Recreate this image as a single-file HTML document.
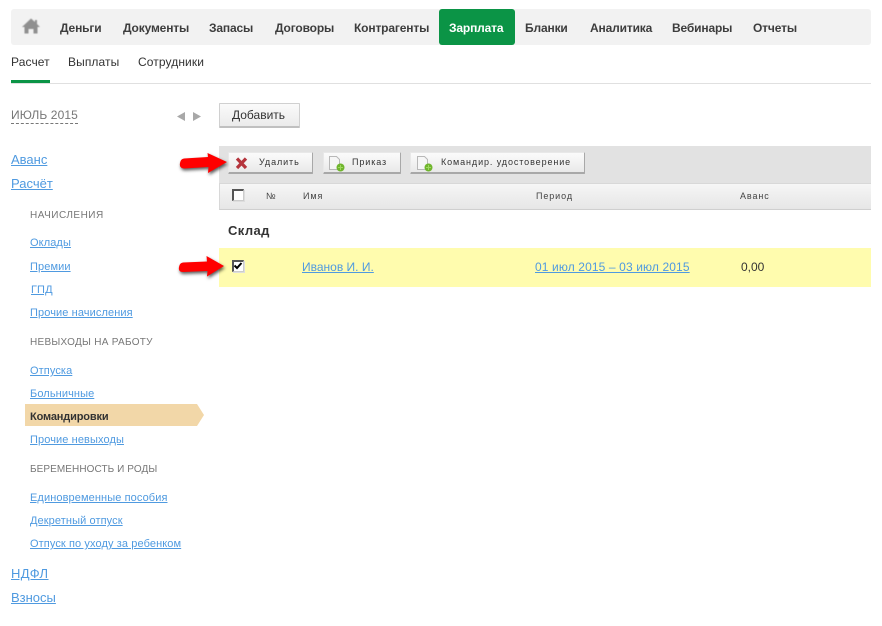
<!DOCTYPE html>
<html lang="ru"><head><meta charset="utf-8"><title>Зарплата</title>
<style>
html,body{margin:0;padding:0;background:#fff}
#p{position:relative;width:882px;height:626px;overflow:hidden;font-family:"Liberation Sans",Arial,sans-serif;background:#fff}
#p div,#p a,#p span.t,#p svg{position:absolute}
.t{white-space:nowrap}
.n{top:20px;height:16px;line-height:16px;font-size:12px;font-weight:bold;color:#3d3d3d;letter-spacing:-.15px}
.s{top:54px;line-height:16px;font-size:12px;color:#333;letter-spacing:.1px}
a{color:#4f9ae0;text-decoration:underline;white-space:nowrap}
.l1{font-size:13px;line-height:16px;left:11px}
.l2{font-size:11px;line-height:14px;left:30px;letter-spacing:.1px}
.h{font-size:10px;line-height:14px;left:30px;color:#777;white-space:nowrap}
.b{background:linear-gradient(#fbfbfb,#e9e9e9);border:1px solid #e8e8e8;border-right-color:#a8a8a8;border-bottom:2px solid #a8a8a8;box-sizing:border-box;border-radius:1px}
.bt{font-size:9px;letter-spacing:.9px;line-height:12px;color:#333;white-space:nowrap;top:156px}
.th{font-size:9px;letter-spacing:.9px;line-height:12px;color:#444;white-space:nowrap;top:190px}
.cb{width:9px;height:9px;background:#fff;border:2px solid #555;border-right:1px solid #ccc;border-bottom:1px solid #ccc;box-shadow:1px 1px 0 #ddd}
</style></head><body><div id="p">
<div style="left:11px;top:9px;width:860px;height:36px;background:#f2f2f2;border-radius:3px"></div>
<svg style="left:21px;top:17px;filter:blur(.4px)" width="20" height="18" viewBox="0 0 20 18"><path d="M10 1.500L14 5V3h2v4l3 3h-2.500v6.500h-4V12h-5v4.500h-4V10H1z" fill="#8f8f8f"/></svg>
<span class="t n" style="left:60px">Деньги</span>
<span class="t n" style="left:123px">Документы</span>
<span class="t n" style="left:209px">Запасы</span>
<span class="t n" style="left:275px">Договоры</span>
<span class="t n" style="left:354px">Контрагенты</span>
<div style="left:439px;top:9px;width:76px;height:36px;background:#0b9446;border-radius:3px"></div>
<span class="t n" style="left:449px;color:#fff">Зарплата</span>
<span class="t n" style="left:525px">Бланки</span>
<span class="t n" style="left:590px">Аналитика</span>
<span class="t n" style="left:672px">Вебинары</span>
<span class="t n" style="left:753px">Отчеты</span>

<span class="t s" style="left:11px">Расчет</span>
<span class="t s" style="left:68px">Выплаты</span>
<span class="t s" style="left:138px">Сотрудники</span>
<div style="left:11px;top:83px;width:860px;height:1px;background:#e0e0e0"></div>
<div style="left:11px;top:80px;width:39px;height:3px;background:#0b9446"></div>

<span class="t" style="left:11px;top:108px;font-size:12px;line-height:15px;color:#777;letter-spacing:.1px;border-bottom:1px dashed #777">ИЮЛЬ 2015</span>
<svg style="left:176px;top:111px" width="26" height="11"><path d="M1 5.500L9 1v9z" fill="#a8a8a8"/><path d="M17 1l8 4.500-8 4.500z" fill="#a8a8a8"/></svg>
<div class="b" style="left:219px;top:103px;width:81px;height:25px;background:linear-gradient(#fafafa,#ebebeb);border:1px solid #d0d0d0;border-bottom:2px solid #c0c0c0"></div>
<span class="t" style="left:232px;top:107px;font-size:12px;line-height:16px;color:#333">Добавить</span>

<a class="l1" style="top:152px">Аванс</a>
<a class="l1" style="top:176px">Расчёт</a>
<span class="h" style="top:209px;position:absolute;letter-spacing:.5px">НАЧИСЛЕНИЯ</span>
<a class="l2" style="top:236px">Оклады</a>
<a class="l2" style="top:260px">Премии</a>
<a class="l2" style="top:283px;left:31px">ГПД</a>
<a class="l2" style="top:306px">Прочие начисления</a>
<span class="h" style="top:336px;position:absolute;letter-spacing:.28px">НЕВЫХОДЫ НА РАБОТУ</span>
<a class="l2" style="top:364px">Отпуска</a>
<a class="l2" style="top:387px">Больничные</a>
<svg style="left:25px;top:404px" width="180" height="22"><path d="M0 0H172L179 11L172 22H0z" fill="#f2d7a8"/></svg>
<span class="t" style="left:30px;top:410px;font-size:11px;font-weight:bold;line-height:14px;color:#333;letter-spacing:-.15px">Командировки</span>
<a class="l2" style="top:433px">Прочие невыходы</a>
<span class="h" style="top:463px;position:absolute;letter-spacing:.08px">БЕРЕМЕННОСТЬ И РОДЫ</span>
<a class="l2" style="top:491px">Единовременные пособия</a>
<a class="l2" style="top:514px">Декретный отпуск</a>
<a class="l2" style="top:537px">Отпуск по уходу за ребенком</a>
<a class="l1" style="top:566px;letter-spacing:.4px">НДФЛ</a>
<a class="l1" style="top:590px">Взносы</a>

<div style="left:219px;top:146px;width:652px;height:37px;background:#e2e2e2"></div>
<div style="left:219px;top:183px;width:652px;height:27px;box-sizing:border-box;background:linear-gradient(#f6f6f6,#e6e6e6);border-top:1px solid #d8d8d8;border-bottom:1px solid #cfcfcf;border-left:1px solid #d8d8d8"></div>

<div class="b" style="left:228px;top:152px;width:85px;height:22px"></div>
<svg style="left:235px;top:156px" width="13" height="14"><path d="M2 2.500L11 12M11 2.500L2 12" stroke="#b5343c" stroke-width="3.200"/></svg>
<span class="t bt" style="left:259px">Удалить</span>

<div class="b" style="left:323px;top:152px;width:78px;height:22px"></div>
<svg style="left:328px;top:155px" width="18" height="18"><path d="M1.500 1.500h7l3 3v10h-10z" fill="#f6f6f6" stroke="#b8b8b8"/><circle cx="12.500" cy="12.500" r="4" fill="#6fb52c"/><path d="M10 12.500h5M12.500 10v5" stroke="#9fd860" stroke-width="1"/></svg>
<span class="t bt" style="left:352px">Приказ</span>

<div class="b" style="left:410px;top:152px;width:175px;height:22px"></div>
<svg style="left:416px;top:155px" width="18" height="18"><path d="M1.500 1.500h7l3 3v10h-10z" fill="#f6f6f6" stroke="#b8b8b8"/><circle cx="12.500" cy="12.500" r="4" fill="#6fb52c"/><path d="M10 12.500h5M12.500 10v5" stroke="#9fd860" stroke-width="1"/></svg>
<span class="t bt" style="left:441px">Командир. удостоверение</span>

<div class="cb" style="left:232px;top:189px"></div>
<span class="t th" style="left:266px">№</span>
<span class="t th" style="left:303px">Имя</span>
<span class="t th" style="left:536px">Период</span>
<span class="t th" style="left:740px">Аванс</span>

<span class="t" style="left:228px;top:223px;font-size:13px;font-weight:bold;line-height:16px;color:#333;letter-spacing:.4px">Склад</span>

<div style="left:219px;top:248px;width:652px;height:39px;background:#fffcae"></div>
<div class="cb" style="left:232px;top:260px"></div>
<svg style="left:233px;top:261px" width="10" height="10"><path d="M1.500 4.500L4 7L8.500 2" fill="none" stroke="#000" stroke-width="2"/></svg>
<a style="left:302px;top:259px;font-size:12px;line-height:16px">Иванов И. И.</a>
<a style="left:535px;top:259px;font-size:12px;line-height:16px;letter-spacing:.12px">01 июл 2015 – 03 июл 2015</a>
<span class="t" style="left:741px;top:259px;font-size:12px;line-height:16px;color:#333">0,00</span>

<svg style="left:176px;top:149px;filter:drop-shadow(1px 2px 1.500px rgba(0,0,0,.65))" width="54" height="30"><path d="M8 9.500L32 8L31.500 4L51 13L32 24L32.500 18L8 19.500Q3 19 4 14Q4.500 10 8 9.500z" fill="#f00"/></svg>
<svg style="left:175px;top:253px;filter:drop-shadow(1px 2px 1.500px rgba(0,0,0,.65))" width="54" height="30"><path d="M8 9.500L32 8.500L31.500 3L49 13L32 23.500L32.500 18L8 19Q3 19 4 14Q4.500 10 8 9.500z" fill="#f00"/></svg>
</div></body></html>
